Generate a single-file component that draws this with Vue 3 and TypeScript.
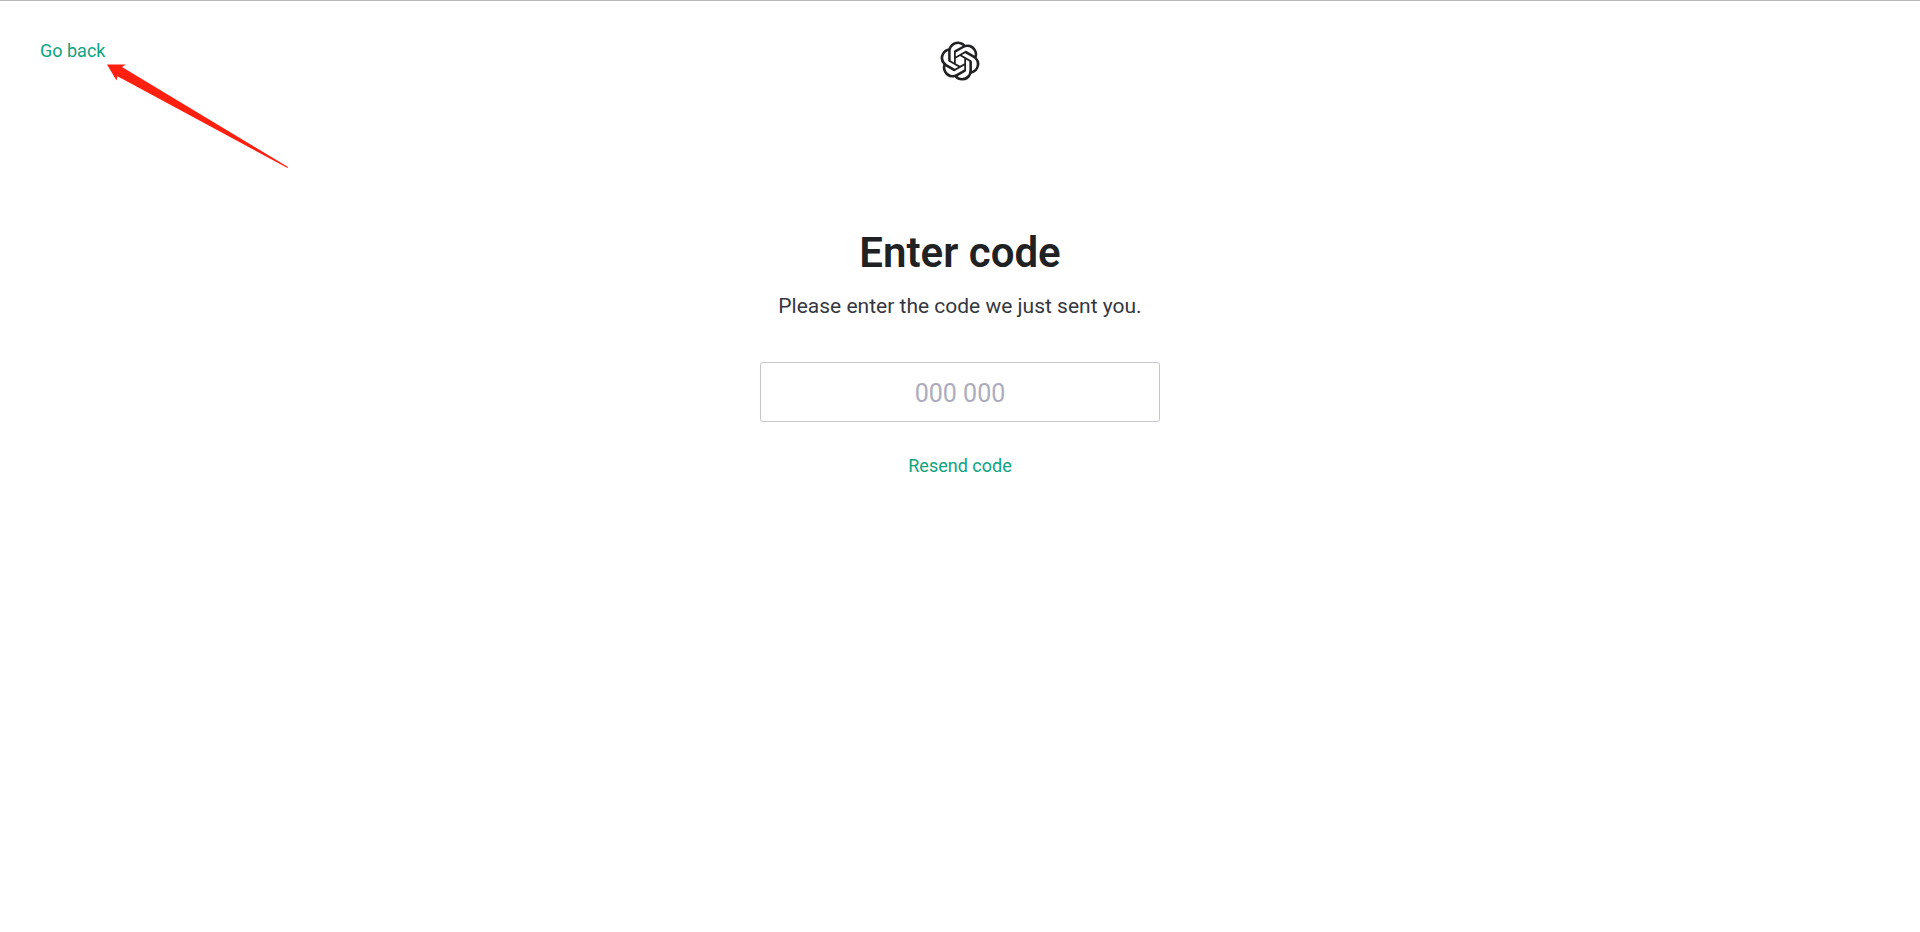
<script setup lang="ts">
import { ref } from 'vue'

const code = ref<string>('')
</script>

<template>
  <div class="page">
    <header class="header">
      <a class="link back" href="#back">Go back</a>
      <svg class="logo" viewBox="-0.300 -0.300 24.600 24.600" role="img" aria-label="OpenAI">
        <path
          fill="currentColor"
          d="M22.2819 9.8211a5.9847 5.9847 0 0 0-.5157-4.9108 6.0462 6.0462 0 0 0-6.5098-2.9A6.0651 6.0651 0 0 0 4.9807 4.1818a5.9847 5.9847 0 0 0-3.9977 2.9 6.0462 6.0462 0 0 0 .7427 7.0966 5.98 5.98 0 0 0 .511 4.9107 6.051 6.051 0 0 0 6.5146 2.9001A5.9847 5.9847 0 0 0 13.2599 24a6.0557 6.0557 0 0 0 5.7718-4.2058 5.9894 5.9894 0 0 0 3.9977-2.9001 6.0557 6.0557 0 0 0-.7475-7.0729zm-9.022 12.6081a4.4755 4.4755 0 0 1-2.8764-1.0408l.1419-.0804 4.7783-2.7582a.7948.7948 0 0 0 .3927-.6813v-6.7369l2.02 1.1686a.071.071 0 0 1 .038.052v5.5826a4.504 4.504 0 0 1-4.4945 4.4944zm-9.6607-4.1254a4.4708 4.4708 0 0 1-.5346-3.0137l.142.0852 4.783 2.7582a.7712.7712 0 0 0 .7806 0l5.8428-3.3685v2.3324a.0804.0804 0 0 1-.0332.0615L9.74 19.9502a4.4992 4.4992 0 0 1-6.1408-1.6464zM2.3408 7.8956a4.485 4.485 0 0 1 2.3655-1.9728V11.6a.7664.7664 0 0 0 .3879.6765l5.8144 3.3543-2.0201 1.1685a.0757.0757 0 0 1-.071 0l-4.8303-2.7865A4.504 4.504 0 0 1 2.3408 7.872zm16.5963 3.8558L13.1038 8.364 15.1192 7.2a.0757.0757 0 0 1 .071 0l4.8303 2.7913a4.4944 4.4944 0 0 1-.6765 8.1042v-5.6772a.79.79 0 0 0-.407-.667zm2.0107-3.0231l-.142-.0852-4.7735-2.7818a.7759.7759 0 0 0-.7854 0L9.409 9.2297V6.8974a.0662.0662 0 0 1 .0284-.0615l4.8303-2.7866a4.4992 4.4992 0 0 1 6.6802 4.66zM8.3065 12.863l-2.02-1.1638a.0804.0804 0 0 1-.038-.0567V6.0742a4.4992 4.4992 0 0 1 7.3757-3.4537l-.142.0805L8.704 5.459a.7948.7948 0 0 0-.3927.6813zm1.0976-2.3654l2.602-1.4998 2.6069 1.4998v2.9994l-2.5974 1.4997-2.6067-1.4997Z"
        />
      </svg>
    </header>

    <main class="main">
      <h1 id="title" class="title">Enter code</h1>
      <p class="lead">Please enter the code we just sent you.</p>
      <form class="form" @submit.prevent>
        <input
          v-model="code"
          class="code"
          type="text"
          inputmode="numeric"
          autocomplete="one-time-code"
          placeholder="000 000"
          aria-labelledby="title"
        />
        <button class="link resend" type="button">Resend code</button>
      </form>
    </main>

    <svg class="arrow" viewBox="0 0 182 104" aria-hidden="true">
      <path
        fill="#ff2010"
        d="M0 .4 19 .4 15 3 181 103 180.500 104 10.500 12.300 9.500 16.500Z"
      />
    </svg>
  </div>
</template>

<style>
body {
  margin: 0;
  background: #fff;
}
</style>

<style scoped>
.page {
  position: relative;
  min-height: 100vh;
  box-sizing: border-box;
  border-top: 1px solid #b8b8b8;
  color: #202123;
  font-family: Roboto, "Liberation Sans", sans-serif;
}

.header {
  display: grid;
  grid-template-columns: 1fr auto 1fr;
  align-items: start;
  padding: 40px;
}

.link {
  color: #10a37f;
  font-size: 18px;
  line-height: 20px;
  font-weight: 400;
  text-decoration: none;
}

.back {
  justify-self: start;
}

.logo {
  display: block;
  width: 40px;
  height: 40px;
}

.main {
  display: flex;
  flex-direction: column;
  align-items: center;
  padding: 104px 24px 24px;
}

.title {
  margin: 0;
  font-size: 42px;
  line-height: 56px;
  font-weight: 600;
}

.lead {
  margin: 11px 0 0;
  color: #353740;
  font-size: 21px;
  line-height: 28px;
}

.form {
  display: flex;
  flex-direction: column;
  align-items: center;
  gap: 34px;
  width: 100%;
  max-width: 400px;
  margin-top: 42px;
}

.code {
  box-sizing: border-box;
  width: 100%;
  height: 60px;
  padding: 2px 16px 0;
  border: 1px solid #c5c5d2;
  border-radius: 3px;
  background: #fff;
  color: #202123;
  font-family: inherit;
  font-size: 25px;
  text-align: center;
}

.code::placeholder {
  color: #acacbe;
  opacity: 1;
}

.resend {
  padding: 0;
  border: 0;
  background: none;
  font-family: inherit;
  cursor: pointer;
}

/* Pointer laid over the page, aimed at the back link */
.arrow {
  position: absolute;
  top: 63px;
  left: 107px;
  width: 182px;
  height: 104px;
  pointer-events: none;
}
</style>
